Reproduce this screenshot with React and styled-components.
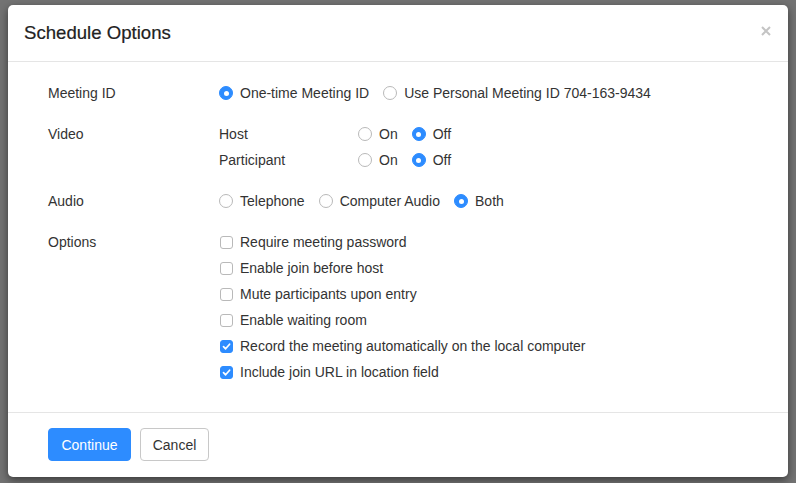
import React, {useState} from 'react'
import styled, {createGlobalStyle} from 'styled-components'

const GlobalStyle = createGlobalStyle`
    html, body {
        margin: 0;
        padding: 0;
        background: #737373;
    }
    * {
        box-sizing: border-box;
    }
`

const Backdrop = styled.div`
    width: 796px;
    height: 483px;
    padding: 5px 8px 6px 8px;
    background: #737373;
    font-family: "Liberation Sans", Arial, sans-serif;
`

const Modal = styled.div`
    width: 780px;
    height: 472px;
    background: #fff;
    border-radius: 5px;
    box-shadow: 0 3px 9px rgba(0, 0, 0, 0.5);
    display: flex;
    flex-direction: column;
`

const Header = styled.div`
    height: 57px;
    padding: 0 16px;
    border-bottom: 1px solid #e5e5e5;
    display: flex;
    align-items: center;
    justify-content: space-between;
`

const Title = styled.div`
    font-size: 18.6px;
    color: #222;
    -webkit-text-stroke: 0.2px #222;
`

const Close = styled.button`
    border: none;
    background: none;
    padding: 0;
    width: 12px;
    height: 12px;
    margin-top: -4px;
    cursor: pointer;
    display: flex;
`

const Body = styled.div`
    flex: 1;
    padding: 18px 40px 0 40px;
    display: flex;
    flex-direction: column;
    gap: 15px;
    border-bottom: 1px solid #e5e5e5;
    font-size: 14px;
    color: #333;
`

const Section = styled.div`
    display: grid;
    grid-template-columns: 171px 1fr;
`

const Label = styled.div`
    line-height: 26px;
`

const Group = styled.div`
    display: flex;
    flex-direction: ${p => (p.$column ? 'column' : 'row')};
    gap: ${p => (p.$column ? '0' : '14px')};
`

const SubRow = styled.div`
    display: grid;
    grid-template-columns: 139px 1fr;
    line-height: 26px;
`

const Choice = styled.label`
    display: flex;
    align-items: center;
    height: 26px;
    gap: 7px;
    cursor: pointer;
    white-space: nowrap;
`

const RadioDot = styled.span`
    width: 14px;
    height: 14px;
    border-radius: 50%;
    flex: none;
    background: ${p => (p.$on ? '#2d8cff' : '#fff')};
    border: 1px solid ${p => (p.$on ? '#2d8cff' : '#b9b9b9')};
    display: flex;
    align-items: center;
    justify-content: center;
    &::after {
        content: '';
        width: 5px;
        height: 5px;
        border-radius: 50%;
        background: #fff;
        display: ${p => (p.$on ? 'block' : 'none')};
    }
`

const CheckBox = styled.span`
    width: 13px;
    height: 13px;
    margin-left: 1px;
    border-radius: 3px;
    flex: none;
    background: ${p => (p.$on ? '#2d8cff' : '#fff')};
    border: 1px solid ${p => (p.$on ? '#2d8cff' : '#b9b9b9')};
    display: flex;
    align-items: center;
    justify-content: center;
`

const Footer = styled.div`
    height: 64px;
    padding: 15px 40px 0 40px;
    display: flex;
    gap: 9px;
    align-items: flex-start;
`

const Button = styled.button`
    height: 33px;
    width: ${p => (p.$primary ? '83px' : '69px')};
    padding: 0;
    border-radius: 4px;
    font-family: inherit;
    font-size: 14px;
    cursor: pointer;
    background: ${p => (p.$primary ? '#2d8cff' : '#fff')};
    color: ${p => (p.$primary ? '#fff' : '#333')};
    border: 1px solid ${p => (p.$primary ? '#2d8cff' : '#c8c8c8')};
`

const Radio = ({on, label, onClick}) => (
    <Choice onClick={onClick}>
        <RadioDot $on={on} />
        {label}
    </Choice>
)

const Check = ({on, label, onClick}) => (
    <Choice onClick={onClick}>
        <CheckBox $on={on}>
            {on && (
                <svg width="9" height="9" viewBox="0 0 9 9">
                    <path d="M1.5 4.7 L3.6 6.8 L7.6 2.2" fill="none" stroke="#fff" strokeWidth="1.7" strokeLinecap="round" strokeLinejoin="round" />
                </svg>
            )}
        </CheckBox>
        {label}
    </Choice>
)

const optionList = [
    'Require meeting password',
    'Enable join before host',
    'Mute participants upon entry',
    'Enable waiting room',
    'Record the meeting automatically on the local computer',
    'Include join URL in location field',
]

const App = () => {
    const [meetingId, setMeetingId] = useState('once')
    const [hostVideo, setHostVideo] = useState(false)
    const [partVideo, setPartVideo] = useState(false)
    const [audio, setAudio] = useState('both')
    const [options, setOptions] = useState([false, false, false, false, true, true])

    const toggle = i => {
        setOptions(options.map((v, j) => (j === i ? !v : v)))
    }

    return (
        <Backdrop>
            <GlobalStyle />
            <Modal>
                <Header>
                    <Title>Schedule Options</Title>
                    <Close aria-label="Close">
                        <svg width="12" height="12" viewBox="0 0 12 12">
                            <path d="M2 2 L10 10 M10 2 L2 10" stroke="#c4c4c4" strokeWidth="2" />
                        </svg>
                    </Close>
                </Header>

                <Body>
                    <Section>
                        <Label>Meeting ID</Label>
                        <Group>
                            <Radio on={meetingId === 'once'} label="One-time Meeting ID" onClick={() => setMeetingId('once')} />
                            <Radio on={meetingId === 'pmi'} label="Use Personal Meeting ID 704-163-9434" onClick={() => setMeetingId('pmi')} />
                        </Group>
                    </Section>

                    <Section>
                        <Label>Video</Label>
                        <Group $column>
                            <SubRow>
                                <span>Host</span>
                                <Group>
                                    <Radio on={hostVideo} label="On" onClick={() => setHostVideo(true)} />
                                    <Radio on={!hostVideo} label="Off" onClick={() => setHostVideo(false)} />
                                </Group>
                            </SubRow>
                            <SubRow>
                                <span>Participant</span>
                                <Group>
                                    <Radio on={partVideo} label="On" onClick={() => setPartVideo(true)} />
                                    <Radio on={!partVideo} label="Off" onClick={() => setPartVideo(false)} />
                                </Group>
                            </SubRow>
                        </Group>
                    </Section>

                    <Section>
                        <Label>Audio</Label>
                        <Group>
                            <Radio on={audio === 'tel'} label="Telephone" onClick={() => setAudio('tel')} />
                            <Radio on={audio === 'comp'} label="Computer Audio" onClick={() => setAudio('comp')} />
                            <Radio on={audio === 'both'} label="Both" onClick={() => setAudio('both')} />
                        </Group>
                    </Section>

                    <Section>
                        <Label>Options</Label>
                        <Group $column>
                            {optionList.map((o, i) => (
                                <Check key={o} on={options[i]} label={o} onClick={() => toggle(i)} />
                            ))}
                        </Group>
                    </Section>
                </Body>

                <Footer>
                    <Button $primary>Continue</Button>
                    <Button>Cancel</Button>
                </Footer>
            </Modal>
        </Backdrop>
    )
}

export default App
